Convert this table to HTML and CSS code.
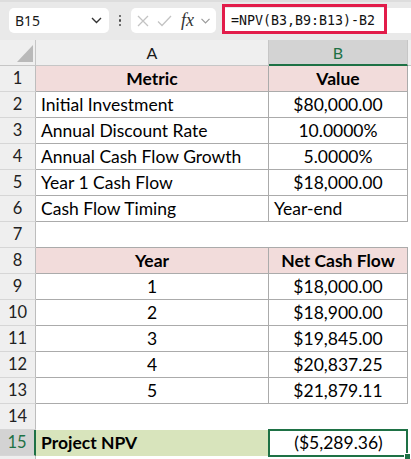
FILE: index.html
```html
<!DOCTYPE html>
<html lang="en">
<head>
    <meta charset="UTF-8">
    <meta name="viewport" content="width=device-width, initial-scale=1.0">
    <title>Project NPV</title>
    <link rel="stylesheet" href="styles.css">
</head>
<body>
    <div class="ribbon">
        <div class="namebox">
            <span>B15</span>
            <svg width="11" height="7" viewBox="0 0 11 7"><path d="M1 1 L5.5 5.5 L10 1" fill="none" stroke="#333" stroke-width="1.4"/></svg>
        </div>
        <div class="dots"><i></i><i></i><i></i></div>
        <div class="fxbox">
            <svg class="ic-x" width="12" height="12" viewBox="0 0 12 12"><path d="M1 1 L11 11 M11 1 L1 11" stroke="#c3c3c3" stroke-width="1.3"/></svg>
            <svg class="ic-ok" width="15" height="12" viewBox="0 0 15 12"><path d="M1 6.5 L5 10.5 L14 1" fill="none" stroke="#c3c3c3" stroke-width="1.3"/></svg>
            <span class="fx">fx</span>
            <svg class="ic-down" width="9" height="6" viewBox="0 0 9 6"><path d="M0.5 0.8 L4.5 4.8 L8.5 0.8" fill="none" stroke="#9a9a9a" stroke-width="1.2"/></svg>
        </div>
        <div class="formula">
            <span>=NPV(B3,B9:B13)-B2</span>
            <span class="mark"></span>
        </div>
    </div>

    <div class="sheet">
        <!-- column headers -->
        <div class="corner">
            <svg width="36" height="26" viewBox="0 0 36 26"><polygon points="33,5 33,22 17,22" fill="#b9b9b9"/></svg>
        </div>
        <div class="ch">A</div>
        <div class="ch ch-sel">B</div>
        <div class="ch ch-rest"></div>

        <!-- 1 -->
        <div class="rh">1</div>
        <div class="cell tb pink bold center">Metric</div>
        <div class="cell tb pink bold center">Value</div>
        <div class="cell"></div>

        <!-- 2 -->
        <div class="rh">2</div>
        <div class="cell tb">Initial Investment</div>
        <div class="cell tb center">$80,000.00</div>
        <div class="cell"></div>

        <!-- 3 -->
        <div class="rh">3</div>
        <div class="cell tb">Annual Discount Rate</div>
        <div class="cell tb center">10.0000%</div>
        <div class="cell"></div>

        <!-- 4 -->
        <div class="rh">4</div>
        <div class="cell tb">Annual Cash Flow Growth</div>
        <div class="cell tb center">5.0000%</div>
        <div class="cell"></div>

        <!-- 5 -->
        <div class="rh">5</div>
        <div class="cell tb">Year 1 Cash Flow</div>
        <div class="cell tb center">$18,000.00</div>
        <div class="cell"></div>

        <!-- 6 -->
        <div class="rh">6</div>
        <div class="cell tb">Cash Flow Timing</div>
        <div class="cell tb">Year-end</div>
        <div class="cell"></div>

        <!-- 7 -->
        <div class="rh">7</div>
        <div class="cell under"></div>
        <div class="cell under"></div>
        <div class="cell"></div>

        <!-- 8 -->
        <div class="rh">8</div>
        <div class="cell tb pink bold center">Year</div>
        <div class="cell tb pink bold center">Net Cash Flow</div>
        <div class="cell"></div>

        <!-- 9 -->
        <div class="rh">9</div>
        <div class="cell tb center">1</div>
        <div class="cell tb center">$18,000.00</div>
        <div class="cell"></div>

        <!-- 10 -->
        <div class="rh">10</div>
        <div class="cell tb center">2</div>
        <div class="cell tb center">$18,900.00</div>
        <div class="cell"></div>

        <!-- 11 -->
        <div class="rh">11</div>
        <div class="cell tb center">3</div>
        <div class="cell tb center">$19,845.00</div>
        <div class="cell"></div>

        <!-- 12 -->
        <div class="rh">12</div>
        <div class="cell tb center">4</div>
        <div class="cell tb center">$20,837.25</div>
        <div class="cell"></div>

        <!-- 13 -->
        <div class="rh">13</div>
        <div class="cell tb center">5</div>
        <div class="cell tb center">$21,879.11</div>
        <div class="cell"></div>

        <!-- 14 -->
        <div class="rh">14</div>
        <div class="cell"></div>
        <div class="cell"></div>
        <div class="cell"></div>

        <!-- 15 -->
        <div class="rh rh-sel">15</div>
        <div class="cell green bold">Project NPV</div>
        <div class="cell center active">($5,289.36)</div>
        <div class="cell"></div>

        <!-- 16, cut off by the window -->
        <div class="rh rh-cut"></div>
        <div class="cell"></div>
        <div class="cell"></div>
        <div class="cell"></div>
    </div>
</body>
</html>
```

FILE: styles.css
```css
:root {
    --ribbon-bg: #e9e9e9;
    --head-bg: #efefef;
    --head-sel: #d3d3d3;
    --excel-green: #1e7145;
    --grid-line: #ababab;
    --pink: #f2dcdb;
    --olive: #d8e4bc;
    --mark: #e21c4a;
}

body {
    margin: 0;
    width: 411px;
    height: 459px;
    overflow: hidden;
    background: #fff;
    font-family: Lato, "Open Sans", sans-serif;
    color: #000;
}

/* formula bar */
.ribbon {
    box-sizing: border-box;
    height: 40px;
    padding-top: 6px;
    display: flex;
    align-items: flex-start;
    background: var(--ribbon-bg);
    border-top: 2px solid #dddddd;
}

.namebox {
    box-sizing: border-box;
    width: 100px;
    height: 25px;
    margin-left: 9px;
    padding: 0 7px 0 6px;
    display: flex;
    align-items: center;
    justify-content: space-between;
    background: #fff;
    border-radius: 5px;
    font-family: "Noto Sans", sans-serif;
    font-size: 14px;
    color: #1a1a1a;
}

.dots {
    width: 22px;
    height: 25px;
    display: flex;
    flex-direction: column;
    align-items: center;
    justify-content: center;
    gap: 2px;
}

.dots i {
    width: 2.5px;
    height: 2.5px;
    background: #4a4a4a;
    border-radius: 50%;
}

.fxbox {
    box-sizing: border-box;
    width: 85px;
    height: 25px;
    padding-left: 6px;
    display: flex;
    align-items: center;
    background: #fff;
    border-radius: 5px;
}

.ic-ok {
    margin-left: 8px;
}

.fx {
    margin-left: 9px;
    font-family: "Liberation Serif", serif;
    font-style: italic;
    font-size: 18px;
    color: #333;
}

.ic-down {
    margin-left: 7px;
}

.formula {
    position: relative;
    flex: 1;
    height: 25px;
    margin-left: 6px;
    padding-left: 9px;
    background: #fff;
    border-radius: 5px 0 0 5px;
    font-family: "DejaVu Sans Mono", monospace;
    font-size: 13.3px;
    line-height: 26px;
    color: #111;
}

.mark {
    position: absolute;
    left: 0;
    top: -4px;
    width: 165px;
    height: 30px;
    box-sizing: border-box;
    border: 3px solid var(--mark);
}

/* grid */
.sheet {
    display: grid;
    grid-template-columns: 36px 233px 139px 1fr;
    grid-template-rows: repeat(16, 26px) 3px;
}

.corner {
    box-sizing: border-box;
    background: var(--head-bg);
    border-right: 1px solid #c6c6c6;
    border-bottom: 1px solid #c6c6c6;
}

.corner svg {
    display: block;
}

.ch {
    box-sizing: border-box;
    background: var(--head-bg);
    border-right: 1px solid #c6c6c6;
    border-bottom: 1px solid #c6c6c6;
    text-align: center;
    font-size: 16px;
    line-height: 25px;
    color: #1a1a1a;
}

.ch-sel {
    background: var(--head-sel);
    border-bottom: 2px solid var(--excel-green);
    color: var(--excel-green);
}

.ch-rest {
    border-right: none;
}

.rh {
    box-sizing: border-box;
    background: var(--head-bg);
    border-right: 1px solid #bdbdbd;
    border-bottom: 1px solid #d6d6d6;
    text-align: center;
    font-size: 16.5px;
    line-height: 25px;
    color: #222;
}

.rh-sel {
    background: var(--head-sel);
    border-right: 2px solid var(--excel-green);
    color: var(--excel-green);
}

.rh-cut {
    border-bottom: none;
}

.cell {
    box-sizing: border-box;
    padding: 0 5px;
    font-size: 17.5px;
    line-height: 25px;
    white-space: nowrap;
    overflow: hidden;
}

.tb {
    border-right: 1px solid var(--grid-line);
    border-bottom: 1px solid var(--grid-line);
}

.under {
    border-bottom: 1px solid var(--grid-line);
}

.center {
    text-align: center;
}

.bold {
    font-weight: 700;
}

.pink {
    background: var(--pink);
}

.green {
    background: var(--olive);
}

.active {
    position: relative;
    overflow: visible;
}

.active::after {
    content: "";
    position: absolute;
    left: -1px;
    top: -1px;
    right: 0;
    bottom: -1px;
    border: 2px solid var(--excel-green);
}

.active::before {
    content: "";
    position: absolute;
    right: -3px;
    bottom: -4px;
    width: 5px;
    height: 5px;
    background: var(--excel-green);
    border: 1px solid #fff;
    z-index: 1;
}
```
